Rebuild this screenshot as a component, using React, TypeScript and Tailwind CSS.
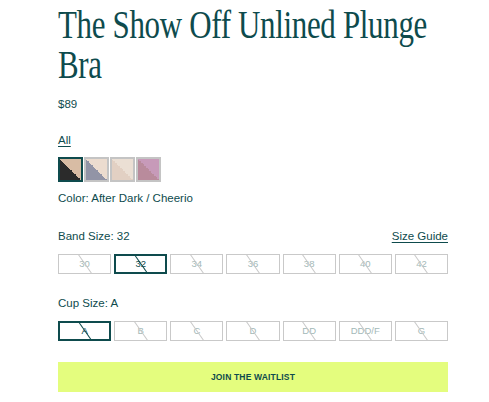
import React from "react";

const teal = "text-[#0e4b4d]";

const swatches = [
  { a: "#2b2b2b", b: "#d8bca4", selected: true },
  { a: "#9294a6", b: "#ecdccf", selected: false },
  { a: "#e2d0c3", b: "#ebdfd4", selected: false },
  { a: "#b98b9c", b: "#c79ab9", selected: false },
];

const bandSizes = ["30", "32", "34", "36", "38", "40", "42"];
const cupSizes = ["A", "B", "C", "D", "DD", "DDD/F", "G"];

function SizeBox({ label, selected }: { label: string; selected: boolean }) {
  return (
    <div
      className={`relative flex h-[20px] items-center justify-center overflow-hidden ${
        selected ? "border-2 border-[#0e4b4d] text-[#0e4b4d]" : "border border-[#c9c9c9] text-[#a3b9b8]"
      }`}
    >
      <span className="text-[9.5px] leading-none">{label}</span>
      <div
        className={`absolute left-1/2 top-1/2 h-[24px] w-px -translate-x-1/2 -translate-y-1/2 -rotate-[35deg] ${
          selected ? "bg-[#0e4b4d]" : "bg-[#c9c9c9]"
        }`}
      />
    </div>
  );
}

export default function App() {
  return (
    <div className="min-h-[402px] overflow-hidden bg-white font-['Liberation_Sans',Arial,sans-serif]">
      <div className={`ml-[58px] w-[390px] pt-[5px] ${teal}`}>
        {/* Title */}
        <h1 className="h-[80px]">
          <div className="w-[504px] origin-top-left scale-x-[0.773] font-['Liberation_Serif',serif] text-[40px] font-normal leading-[40px] tracking-[-0.01em]">
            The Show Off Unlined Plunge Bra
          </div>
        </h1>

        <p className="mt-[11px] text-[11.5px] leading-4">$89</p>

        <div className="mt-[20px] text-[11.5px] leading-4">
          <span className="underline decoration-[#0e4b4d] underline-offset-2">All</span>
        </div>

        {/* Swatches */}
        <div className="mt-[9px] flex gap-px">
          {swatches.map((s, i) => (
            <div
              key={i}
              className={`h-[25px] w-[25px] border-2 ${s.selected ? "border-[#0e4b4d]" : "border-[#c4c4c4]"}`}
              style={{ background: `linear-gradient(to top right, ${s.a} 50%, ${s.b} 50%)` }}
            />
          ))}
        </div>

        <p className="mt-[8px] text-[11.5px] leading-4">Color: After Dark / Cheerio</p>

        {/* Band size */}
        <div className="mt-[22px] flex items-center justify-between text-[11.5px] leading-4">
          <span>Band Size: 32</span>
          <a className="underline decoration-[#0e4b4d] underline-offset-2">Size Guide</a>
        </div>
        <div className="mt-[10px] grid grid-cols-7 gap-[3px]">
          {bandSizes.map((s) => (
            <SizeBox key={s} label={s} selected={s === "32"} />
          ))}
        </div>

        {/* Cup size */}
        <p className="mt-[21px] text-[11.5px] leading-4">Cup Size: A</p>
        <div className="mt-[10px] grid grid-cols-7 gap-[3px]">
          {cupSizes.map((s) => (
            <SizeBox key={s} label={s} selected={s === "A"} />
          ))}
        </div>

        <button className="mt-[21px] flex h-[30px] w-full items-center justify-center bg-[#e4fd7e] text-[8.5px] font-semibold tracking-[0.02em] text-[#0e4b4d]">
          JOIN THE WAITLIST
        </button>
      </div>
    </div>
  );
}
